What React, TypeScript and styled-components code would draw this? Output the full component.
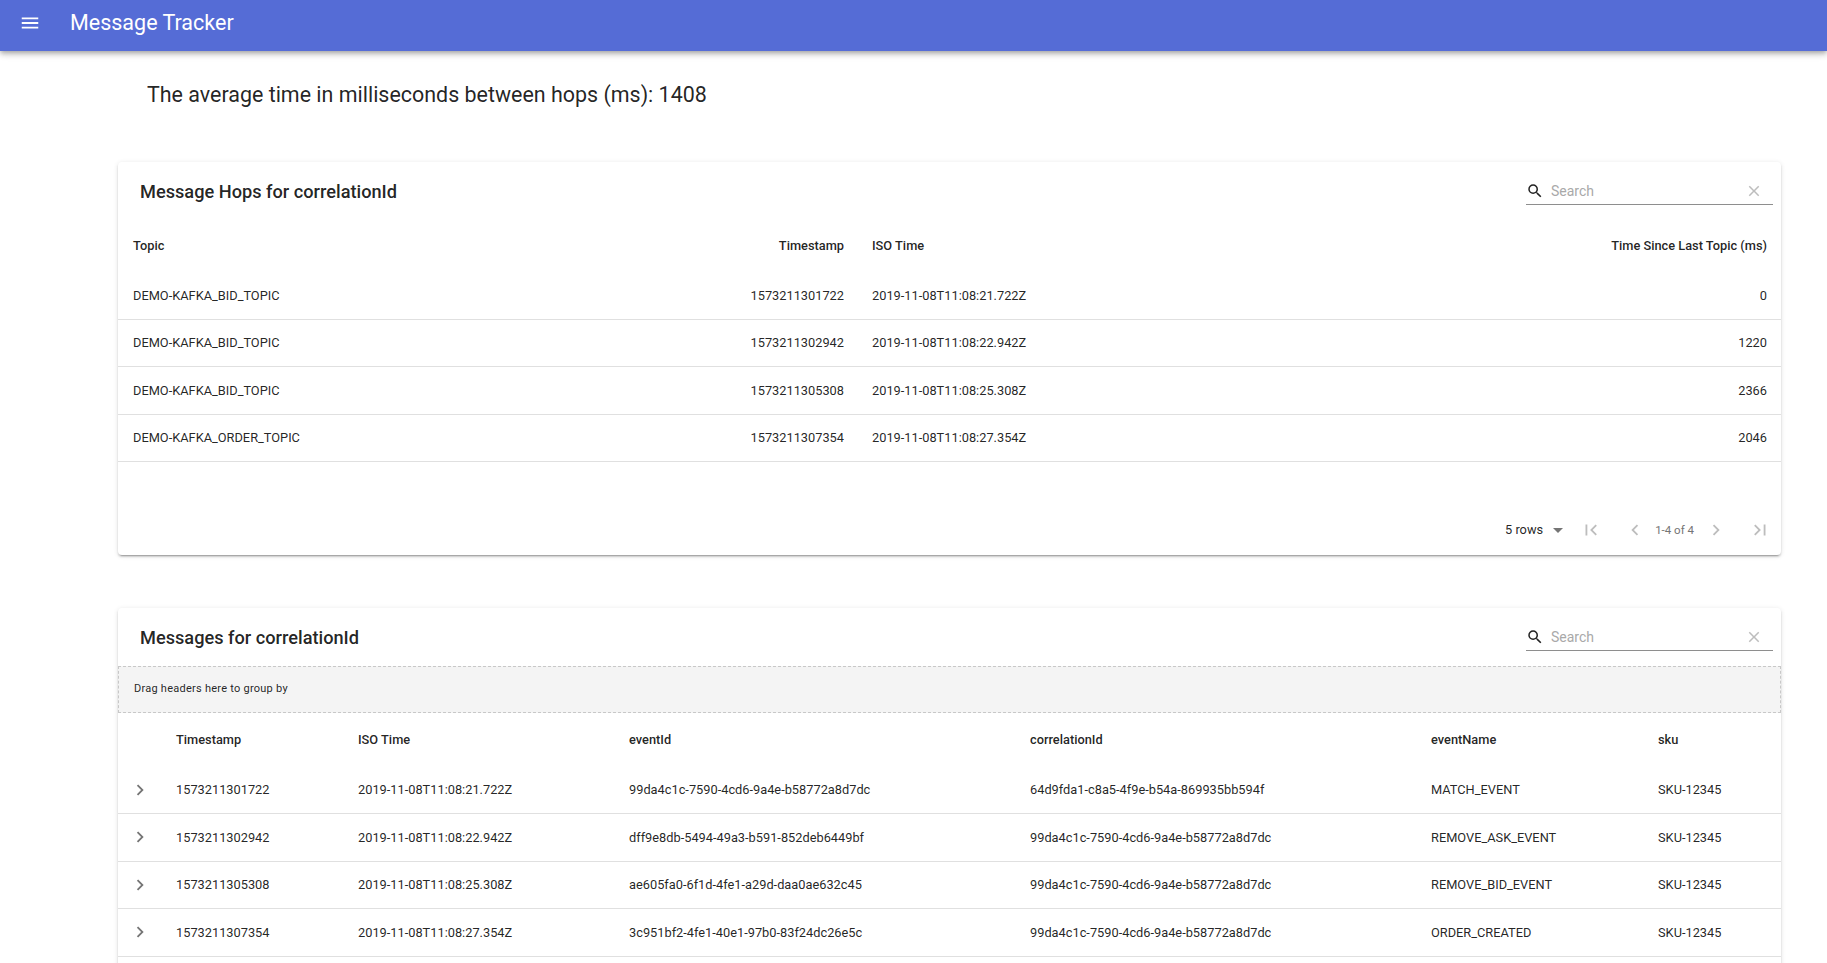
import React from "react";
import styled, { createGlobalStyle } from "styled-components";
import { MdMenu, MdSearch, MdClear, MdFirstPage, MdLastPage, MdChevronLeft, MdChevronRight, MdArrowDropDown } from "react-icons/md";

const Global = createGlobalStyle`
  html, body { margin: 0; padding: 0; background: #fff; overflow: hidden; height: 963px; }
  body { font-family: Roboto, "Liberation Sans", sans-serif; color: rgba(0,0,0,0.87); }
`;

const AppBar = styled.header`
  height: 51px; box-sizing: border-box; background: #556cd6; color: #fff; display: flex; align-items: center; padding: 0 0 6px 19px;
  box-shadow: 0 2px 4px -1px rgba(0,0,0,.2), 0 4px 5px 0 rgba(0,0,0,.14), 0 1px 10px 0 rgba(0,0,0,.12);
  position: relative;
`;
const MenuIcon = styled(MdMenu)` font-size: 22px; width: 22px; margin-right: 29px; `;
const AppTitle = styled.h1` margin: 0; font-size: 21.5px; font-weight: 400; line-height: 44px; `;
const Main = styled.main` padding: 0 46px 0 118px; `;
const Average = styled.h2`
  margin: 0; padding: 22px 0 0 29px; height: 89px; font-size: 21.45px; font-weight: 400; line-height: 44px;
`;
const Card = styled.section<{ $mb?: number }>`
  background: #fff; border-radius: 4px; margin-bottom: ${p => p.$mb ?? 0}px;
  box-shadow: 0 3px 1px -2px rgba(0,0,0,.2), 0 2px 2px 0 rgba(0,0,0,.14), 0 1px 5px 0 rgba(0,0,0,.12);
`;
const CardHead = styled.div` height: 58px; display: flex; align-items: center; justify-content: space-between; padding: 0 8px 0 22px; `;
const CardTitle = styled.h3` margin: 0; font-size: 18.2px; font-weight: 500; `;
const SearchBox = styled.div`
  width: 247px; height: 30px; margin-bottom: 3px; border-bottom: 1px solid #8e8e8e; display: flex; align-items: center; box-sizing: border-box; padding: 3px 10px 0 0;
`;
const SearchIcon = styled(MdSearch)` font-size: 18px; color: rgba(0,0,0,.87); flex: none; `;
const SearchPlaceholder = styled.span` flex: 1; margin-left: 7px; font-size: 14px; color: #a9a9a9; `;
const ClearIcon = styled(MdClear)` font-size: 18px; color: #bdbdbd; flex: none; `;

const Table = styled.table` width: 100%; border-collapse: collapse; table-layout: fixed; font-size: 12.8px; `;
const Th = styled.th<{ $right?: boolean; $w?: number; $h?: number; $inset?: boolean; $pb?: number }>`
  width: ${p => (p.$w ? `${p.$w}px` : "auto")};
  height: ${p => p.$h ?? 52}px; padding: 0 14px ${p => p.$pb ?? 2}px ${p => (p.$inset ? 15 : 14)}px; box-sizing: border-box; font-weight: 500; font-size: 12.8px;
  text-align: ${p => (p.$right ? "right" : "left")}; vertical-align: middle;
`;
const Td = styled.td<{ $right?: boolean; $inset?: boolean }>`
  padding: 0 14px 0.5px ${p => (p.$inset ? 15 : 14)}px; box-sizing: border-box; white-space: nowrap; text-align: ${p => (p.$right ? "right" : "left")}; color: rgba(0,0,0,.87);
`;
const Tr = styled.tr` height: 47.4px; border-bottom: 1px solid #e0e0e0; `;
const Pager = styled.div` height: 93px; display: flex; align-items: center; justify-content: flex-end; padding: 42px 10px 0 0; color: rgba(0,0,0,.87); box-sizing: border-box; `;
const RowsLabel = styled.span` font-size: 12.8px; margin-right: 3px; `;
const Drop = styled(MdArrowDropDown)` font-size: 24px; color: #757575; margin-right: 10px; `;
const PageIcon = styled.span<{ $ml?: number }>` display: inline-flex; font-size: 22px; color: #bdbdbd; margin-left: ${p => p.$ml ?? 0}px; `;
const PageText = styled.span` font-size: 11.5px; color: #757575; margin: 0 11px 0 9px; `;
const GroupBar = styled.div`
  height: 47px; box-sizing: border-box; background: #f4f4f4; border: 1px dashed #c8c8c8;
  display: flex; align-items: center; padding: 0 0 2px 15px; font-size: 11px; letter-spacing: 0.25px; color: rgba(0,0,0,.87);
`;
const Expand = styled(MdChevronRight)` font-size: 22px; color: #757575; display: block; margin-left: -3px; `;
const CardFoot = styled.div` height: 93px; `;

const hops = [
  ["DEMO-KAFKA_BID_TOPIC", "1573211301722", "2019-11-08T11:08:21.722Z", "0"],
  ["DEMO-KAFKA_BID_TOPIC", "1573211302942", "2019-11-08T11:08:22.942Z", "1220"],
  ["DEMO-KAFKA_BID_TOPIC", "1573211305308", "2019-11-08T11:08:25.308Z", "2366"],
  ["DEMO-KAFKA_ORDER_TOPIC", "1573211307354", "2019-11-08T11:08:27.354Z", "2046"],
];
const messages = [
  ["1573211301722", "2019-11-08T11:08:21.722Z", "99da4c1c-7590-4cd6-9a4e-b58772a8d7dc", "64d9fda1-c8a5-4f9e-b54a-869935bb594f", "MATCH_EVENT", "SKU-12345"],
  ["1573211302942", "2019-11-08T11:08:22.942Z", "dff9e8db-5494-49a3-b591-852deb6449bf", "99da4c1c-7590-4cd6-9a4e-b58772a8d7dc", "REMOVE_ASK_EVENT", "SKU-12345"],
  ["1573211305308", "2019-11-08T11:08:25.308Z", "ae605fa0-6f1d-4fe1-a29d-daa0ae632c45", "99da4c1c-7590-4cd6-9a4e-b58772a8d7dc", "REMOVE_BID_EVENT", "SKU-12345"],
  ["1573211307354", "2019-11-08T11:08:27.354Z", "3c951bf2-4fe1-40e1-97b0-83f24dc26e5c", "99da4c1c-7590-4cd6-9a4e-b58772a8d7dc", "ORDER_CREATED", "SKU-12345"],
];

const Search = () => (
  <SearchBox>
    <SearchIcon />
    <SearchPlaceholder>Search</SearchPlaceholder>
    <ClearIcon />
  </SearchBox>
);

export default function App() {
  return (
    <>
      <Global />
      <AppBar>
        <MenuIcon />
        <AppTitle>Message Tracker</AppTitle>
      </AppBar>
      <Main>
        <Average>The average time in milliseconds between hops (ms): 1408</Average>
        <Card $mb={53.4}>
          <CardHead>
            <CardTitle>Message Hops for correlationId</CardTitle>
            <Search />
          </CardHead>
          <Table>
            <thead>
              <tr>
                <Th $inset $w={451}>Topic</Th>
                <Th $right $w={289}>Timestamp</Th>
                <Th>ISO Time</Th>
                <Th $right>Time Since Last Topic (ms)</Th>
              </tr>
            </thead>
            <tbody>
              {hops.map((r, i) => (
                <Tr key={i}>
                  <Td $inset>{r[0]}</Td>
                  <Td $right>{r[1]}</Td>
                  <Td>{r[2]}</Td>
                  <Td $right>{r[3]}</Td>
                </Tr>
              ))}
            </tbody>
          </Table>
          <Pager>
            <RowsLabel>5 rows</RowsLabel>
            <Drop />
            <PageIcon><MdFirstPage /></PageIcon>
            <PageIcon $ml={22}><MdChevronLeft /></PageIcon>
            <PageText>1-4 of 4</PageText>
            <PageIcon><MdChevronRight /></PageIcon>
            <PageIcon $ml={22}><MdLastPage /></PageIcon>
          </Pager>
        </Card>
        <Card>
          <CardHead>
            <CardTitle>Messages for correlationId</CardTitle>
            <Search />
          </CardHead>
          <GroupBar>Drag headers here to group by</GroupBar>
          <Table>
            <thead>
              <tr>
                <Th $pb={0} $h={53} $w={44} />
                <Th $pb={0} $h={53} $w={182}>Timestamp</Th>
                <Th $pb={0} $h={53} $w={271}>ISO Time</Th>
                <Th $pb={0} $h={53} $w={401}>eventId</Th>
                <Th $pb={0} $h={53} $w={401}>correlationId</Th>
                <Th $pb={0} $h={53} $w={227}>eventName</Th>
                <Th $pb={0} $h={53}>sku</Th>
              </tr>
            </thead>
            <tbody>
              {messages.map((r, i) => (
                <Tr key={i}>
                  <Td><Expand /></Td>
                  {r.map((c, j) => <Td key={j}>{c}</Td>)}
                </Tr>
              ))}
            </tbody>
          </Table>
          <CardFoot />
        </Card>
      </Main>
    </>
  );
}
